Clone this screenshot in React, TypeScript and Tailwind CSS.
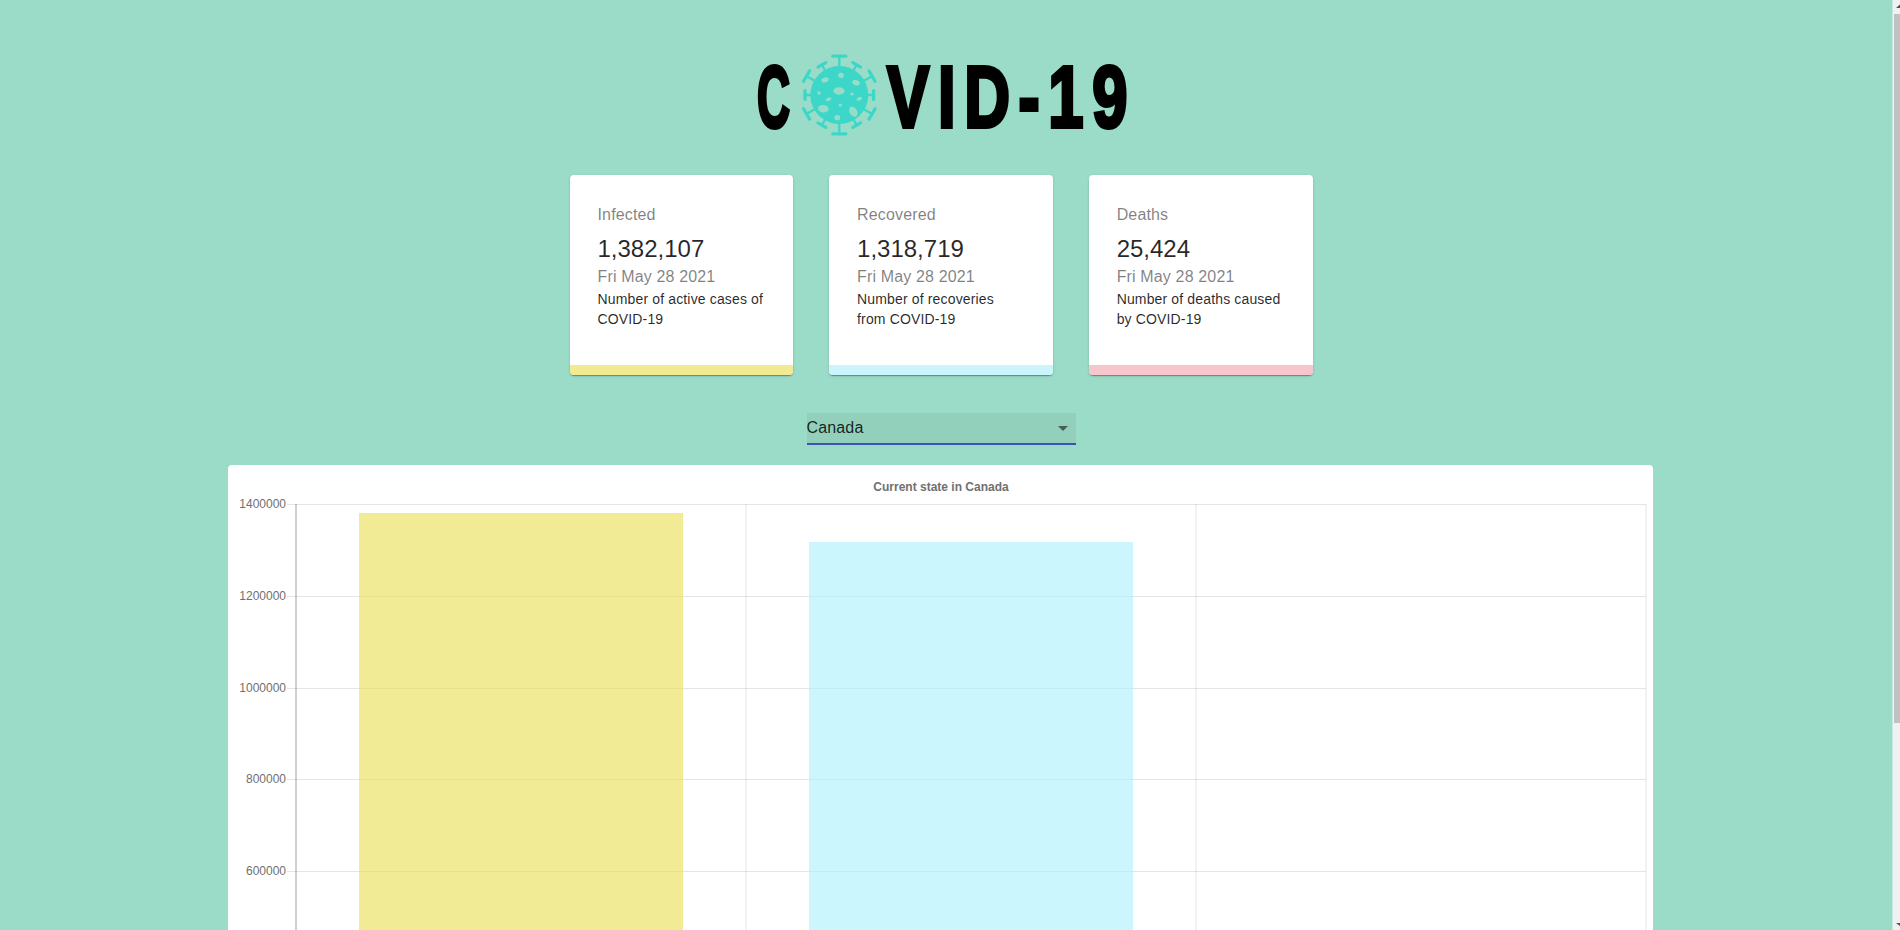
const yTicks = [
  { label: "1400000", y: 504.5 },
  { label: "1200000", y: 596.5 },
  { label: "1000000", y: 688.5 },
  { label: "800000", y: 779.5 },
  { label: "600000", y: 871.5 },
];

const cards = [
  { title: "Infected", value: "1,382,107", text: "Number of active cases of COVID-19", bar: "bg-[#f2ea92]" },
  { title: "Recovered", value: "1,318,719", text: "Number of recoveries from COVID-19", bar: "bg-[#cbf5fd]" },
  { title: "Deaths", value: "25,424", text: "Number of deaths caused by COVID-19", bar: "bg-[#f7c5cc]" },
];

const spikes = [
  { a: 0, r: 40, w: 6.5 },
  { a: 30, r: 36, w: 4.5 },
  { a: 60, r: 39, w: 6 },
  { a: 90, r: 35.5, w: 4.5 },
  { a: 120, r: 39, w: 6 },
  { a: 150, r: 36, w: 4.5 },
  { a: 180, r: 40, w: 6.5 },
  { a: 210, r: 36, w: 4.5 },
  { a: 240, r: 39, w: 6 },
  { a: 270, r: 35.5, w: 4.5 },
  { a: 300, r: 39, w: 6 },
  { a: 330, r: 36, w: 4.5 },
];

function Virus() {
  return (
    <svg viewBox="0 0 80 84" className="w-[80px] h-[84px] shrink-0 ml-[9px] mr-[8px]" fill="#3cd7c8">
      <circle cx="40.3" cy="42" r="29" />
      {spikes.map((s) => (
        <g key={s.a} transform={`rotate(${s.a} 40.3 42)`} stroke="#3cd7c8" strokeLinecap="round">
          <line x1="40.3" y1="14" x2="40.3" y2={42 - s.r + 1} strokeWidth="2.3" />
          <line x1={40.3 - s.w} y1={42 - s.r + 1.2} x2={40.3 + s.w} y2={42 - s.r + 1.2} strokeWidth="3.2" />
        </g>
      ))}
      <g fill="#98dbc6">
        <ellipse cx="40" cy="38" rx="5.7" ry="3.7" />
        <ellipse cx="42" cy="22.3" rx="2.8" ry="2.6" />
        <ellipse cx="26" cy="27" rx="3.8" ry="2.4" transform="rotate(-20 26 27)" />
        <ellipse cx="57" cy="29.7" rx="3.9" ry="2.6" transform="rotate(20 57 29.7)" />
        <ellipse cx="20" cy="40" rx="1.8" ry="1.7" />
        <ellipse cx="53" cy="41" rx="1.8" ry="1.6" />
        <ellipse cx="29.7" cy="46.3" rx="2.8" ry="1.7" transform="rotate(-25 29.7 46.3)" />
        <ellipse cx="60.3" cy="45.7" rx="2.8" ry="1.7" transform="rotate(-25 60.3 45.7)" />
        <ellipse cx="41.3" cy="52" rx="1.8" ry="1.6" />
        <ellipse cx="24.3" cy="55.7" rx="5.4" ry="3.7" transform="rotate(5 24.3 55.7)" />
        <ellipse cx="54.3" cy="58.7" rx="3.7" ry="5.4" transform="rotate(-30 54.3 58.7)" />
        <ellipse cx="38.3" cy="64.7" rx="2.8" ry="2.6" />
      </g>
    </svg>
  );
}

function Chart() {
  return (
    <svg viewBox="228 465 1425 520" className="block w-[1425px] h-[520px]">
      {yTicks.map((t) => (
        <g key={t.label}>
          <line x1="287" x2="1646" y1={t.y} y2={t.y} stroke="rgba(0,0,0,0.1)" />
          <text x="286" y={t.y + 3.5} textAnchor="end" fontFamily="Liberation Sans" fontSize="12" fill="#707070">
            {t.label}
          </text>
        </g>
      ))}
      {[746, 1196, 1646].map((x) => (
        <line key={x} x1={x} x2={x} y1="504" y2="985" stroke="rgba(0,0,0,0.1)" />
      ))}
      <line x1="296" x2="296" y1="504" y2="985" stroke="rgba(0,0,0,0.25)" strokeWidth="1.5" />
      <rect x="359" y="513" width="324" height="472" fill="rgba(232,224,92,0.66)" />
      <rect x="809" y="542" width="324" height="443" fill="rgba(177,241,253,0.65)" />
      <text x="941" y="491" textAnchor="middle" fontFamily="Liberation Sans" fontSize="12" fontWeight="700" fill="#707070">
        Current state in Canada
      </text>
    </svg>
  );
}

export default function App() {
  return (
    <div className="h-[930px] overflow-hidden flex bg-[#9adcc7]">
      <main className="w-[1881px] shrink-0 flex flex-col items-center font-['Liberation_Sans',sans-serif]">
        <header className="mt-[53px] h-[84px] shrink-0 flex items-center pl-[3px] text-black font-bold leading-none [-webkit-text-stroke:4px_black]">
          <span className="block mt-[4px] w-[33px] text-[88px] origin-left scale-x-[0.52]">C</span>
          <Virus />
          <span className="block mt-[4px] w-[240px] text-[88px] tracking-[12px] whitespace-nowrap origin-left scale-x-[0.72]">VID-19</span>
        </header>
        <section className="mt-[38px] shrink-0 grid grid-cols-3 gap-[35.7px] w-[743px] ml-[1px]">
          {cards.map((c) => (
            <article key={c.title} className="h-[200px] bg-white rounded shadow-[0_2px_1px_-1px_rgba(0,0,0,0.2),0_1px_1px_0_rgba(0,0,0,0.14),0_1px_3px_0_rgba(0,0,0,0.12)] overflow-hidden flex flex-col">
              <div className="flex-1 px-[28px] pt-[28px]">
                <p className="text-base leading-[24px] tracking-[0.15px] text-black/50">{c.title}</p>
                <p className="mt-[6px] text-2xl leading-[32px] text-black/85">{c.value}</p>
                <p className="text-base leading-[24px] tracking-[0.15px] text-black/50">Fri May 28 2021</p>
                <p className="text-sm leading-[20px] tracking-[0.15px] text-black/85">{c.text}</p>
              </div>
              <div className={`h-[10px] ${c.bar}`} />
            </article>
          ))}
        </section>
        <div className="mt-[38px] ml-[1px] w-[269px] h-[32px] shrink-0 bg-black/5 border-b-2 border-[#3f51b5] flex items-center justify-between text-base tracking-[0.15px] text-black/85">
          <span>Canada</span>
          <svg viewBox="0 0 10 5" className="w-[10px] h-[5px] mr-[8px]" fill="rgba(0,0,0,0.54)">
            <path d="M0 0h10L5 5z" />
          </svg>
        </div>
        <section className="mt-[20px] w-[1425px] shrink-0 bg-white rounded-t">
          <Chart />
        </section>
      </main>
      <div className="flex-1" />
      <aside className="w-[8px] h-full shrink-0 bg-[#f1f1f1] border-l border-[#c8eadf] flex flex-col justify-between">
        <div>
          <svg viewBox="0 0 7 14" className="block w-[7px] h-[14px]" fill="#505050">
            <path d="M3 8L7 4.5V8z" />
          </svg>
          <div className="ml-[1px] h-[709px] bg-[#c1c1c1]" />
        </div>
        <svg viewBox="0 0 7 14" className="block w-[7px] h-[14px]" fill="#505050">
          <path d="M3 7h4v3z" />
        </svg>
      </aside>
    </div>
  );
}
